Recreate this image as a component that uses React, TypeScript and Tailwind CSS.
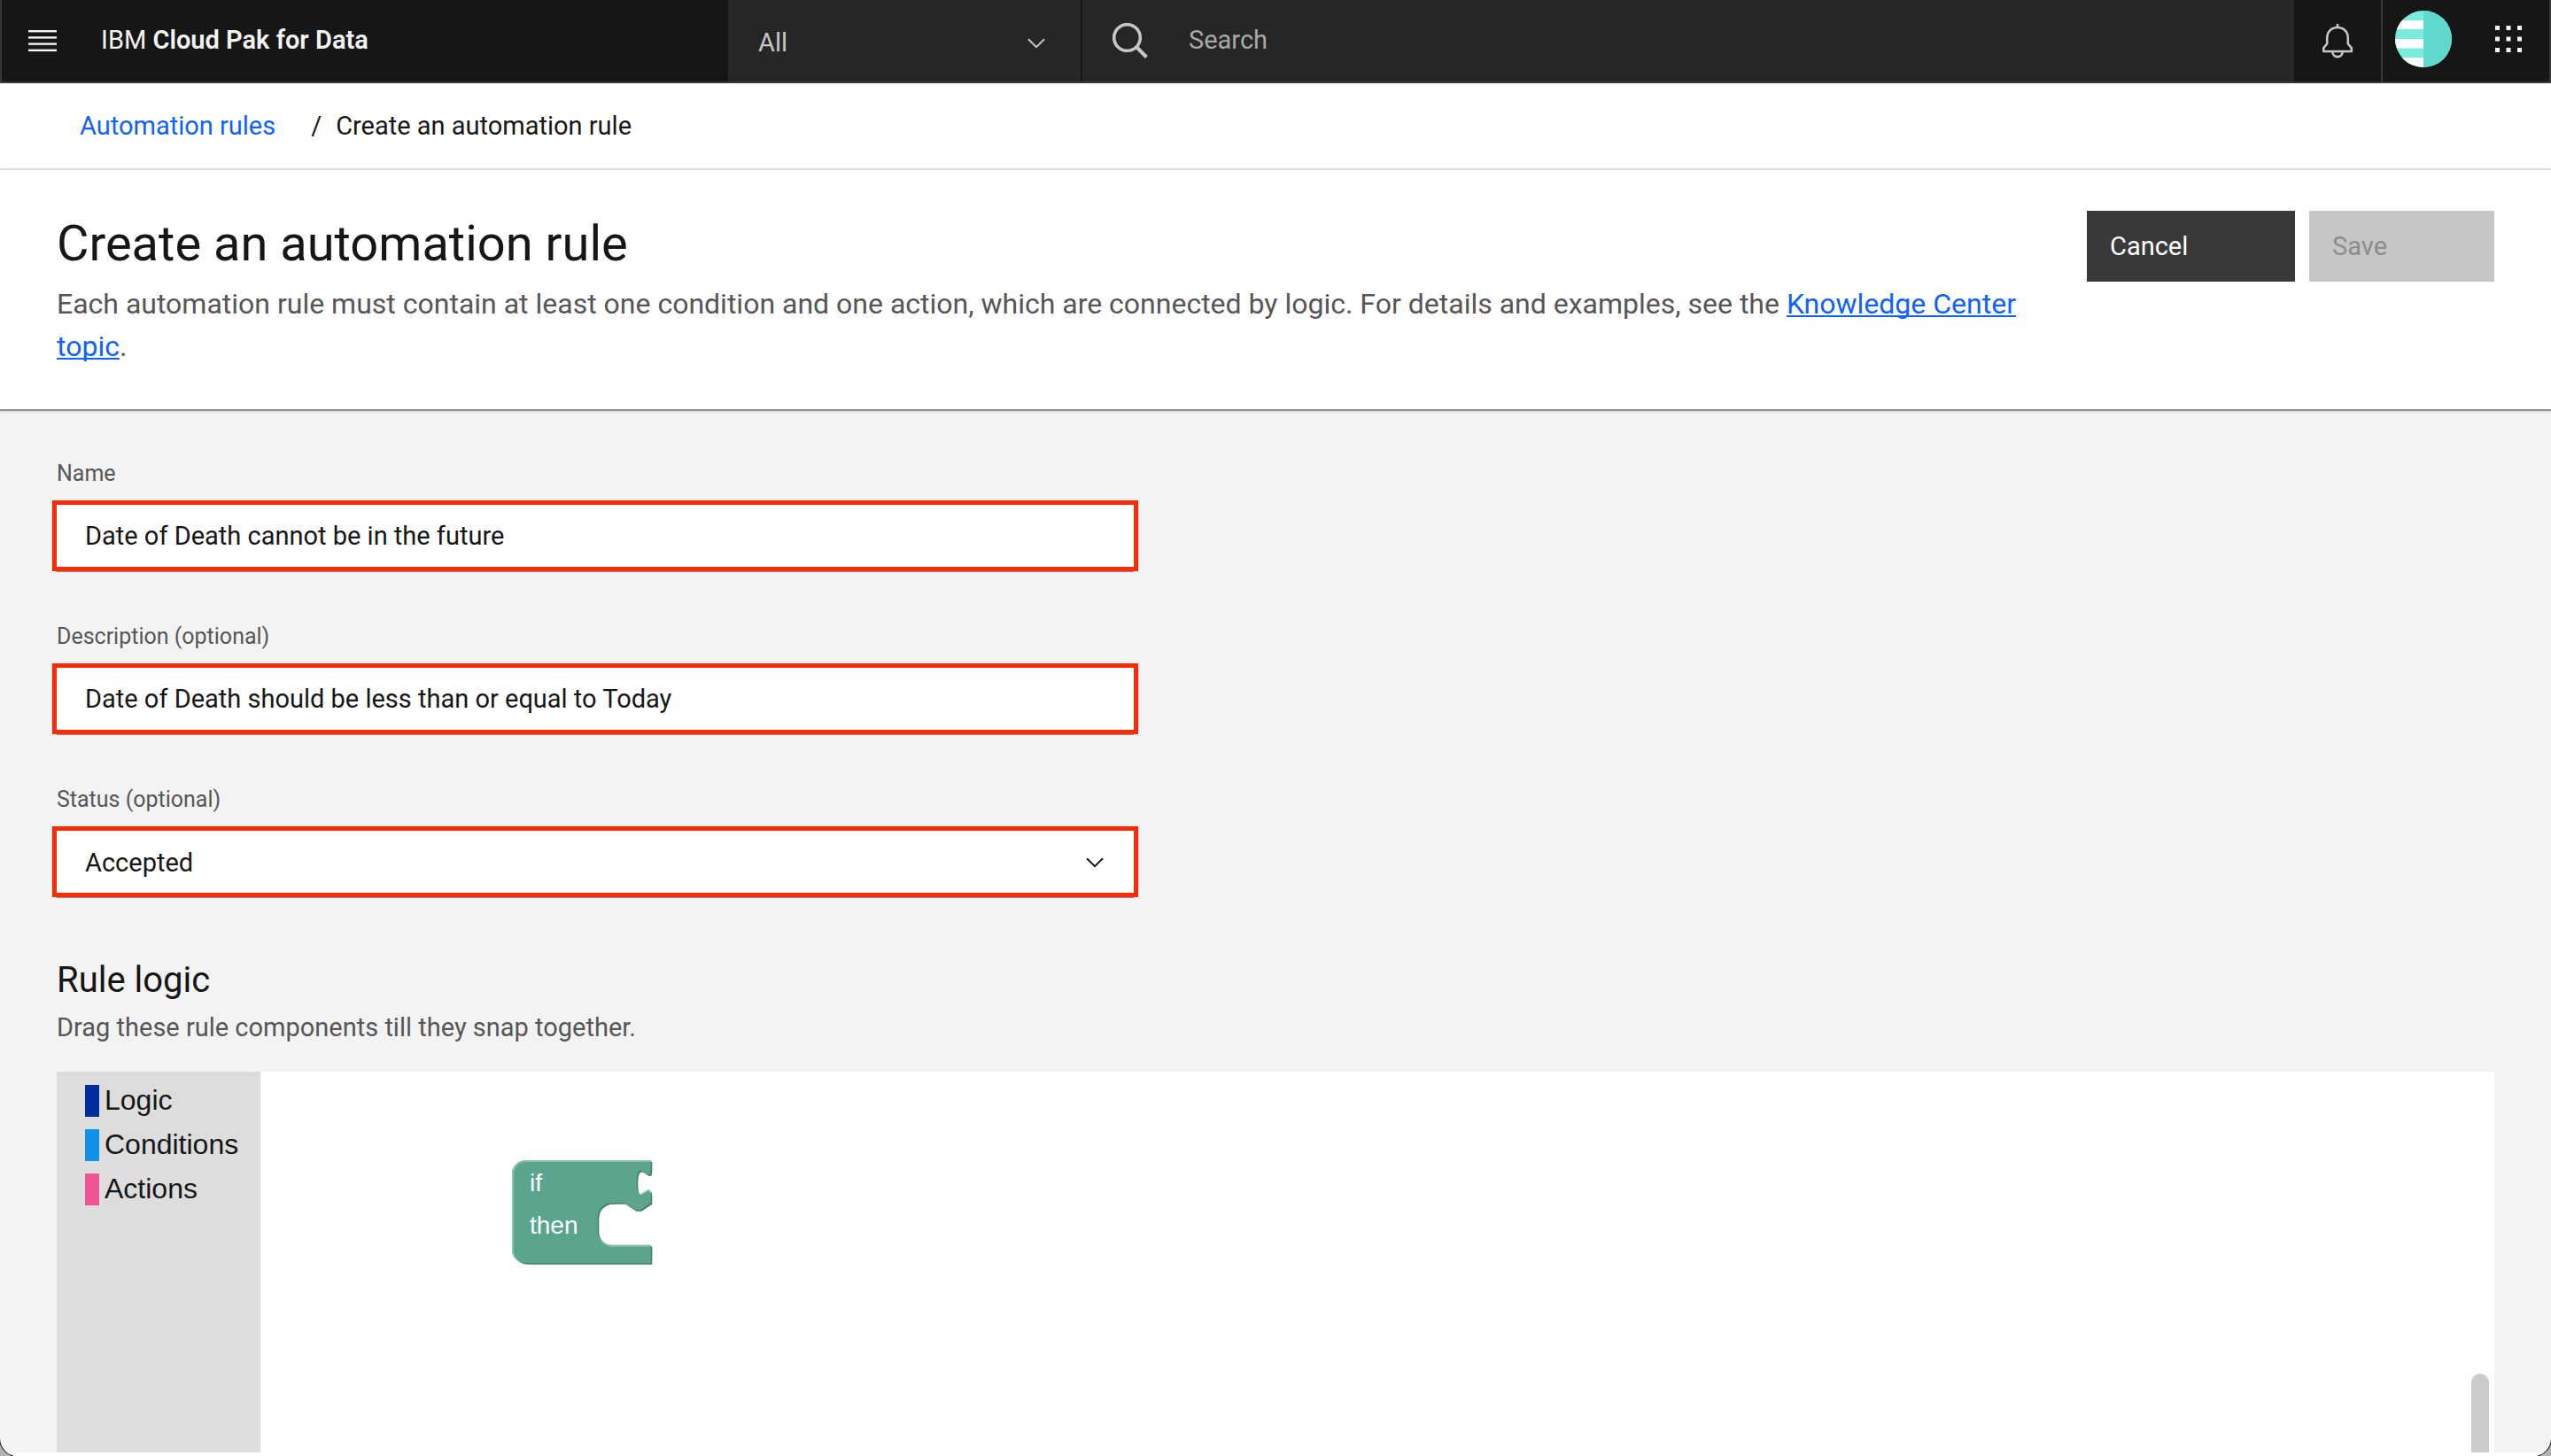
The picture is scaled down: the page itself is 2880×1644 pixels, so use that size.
import React from "react";

function MenuIcon() {
  return (
    <svg className="h-6 w-8" viewBox="0 0 32 24" fill="#f4f4f4" aria-hidden="true">
      <rect y="0" width="32" height="2.4" />
      <rect y="7.2" width="32" height="2.4" />
      <rect y="14.4" width="32" height="2.4" />
      <rect y="21.6" width="32" height="2.4" />
    </svg>
  );
}

function Chevron({ className }: { className: string }) {
  return (
    <svg className={className} viewBox="0 0 20 12" fill="none" stroke="currentColor" strokeWidth="2" aria-hidden="true">
      <path d="M1 1.2 10 10.2 19 1.2" />
    </svg>
  );
}

function SearchIcon() {
  return (
    <svg className="h-10 w-10" viewBox="0 0 40 40" fill="none" stroke="#c6c6c6" aria-hidden="true">
      <circle cx="16.5" cy="16.5" r="14.8" strokeWidth="3.6" />
      <path d="M27.2 27.2 38.4 38.4" strokeWidth="4.2" />
    </svg>
  );
}

function BellIcon() {
  return (
    <svg className="h-10 w-9" viewBox="0 0 36 40" fill="none" stroke="#c6c6c6" strokeWidth="2.6" strokeLinejoin="round" aria-hidden="true">
      <path d="M18 1v4" />
      <path d="M18 5C11 5 6.2 10 6.2 17v6.5L2.2 28.2V32H33.8V28.2L29.8 23.5V17C29.8 10 25 5 18 5Z" />
      <path d="M12.4 32.5c0 3.4 2.5 5.6 5.6 5.6s5.6-2.2 5.6-5.6" />
    </svg>
  );
}

function Avatar() {
  return (
    <svg className="size-16" viewBox="0 0 64 64" aria-hidden="true">
      <defs>
        <clipPath id="avatar-clip">
          <circle cx="32" cy="32" r="32" />
        </clipPath>
      </defs>
      <g clipPath="url(#avatar-clip)">
        <rect width="64" height="64" fill="#78eddb" />
        <rect y="11" width="32" height="10" fill="#fff" />
        <rect y="32" width="32" height="10.5" fill="#fff" />
        <rect y="53" width="32" height="11" fill="#fff" />
        <rect x="32" width="32" height="64" fill="#5fd9cb" />
      </g>
    </svg>
  );
}

function AppsIcon() {
  const steps = [0, 12.5, 25];
  return (
    <svg className="size-[30px]" viewBox="0 0 30 30" fill="#f4f4f4" aria-hidden="true">
      {steps.map((y) => steps.map((x) => <rect key={`${x}-${y}`} x={x} y={y} width="5" height="5" />))}
    </svg>
  );
}

const BLOCK =
  "M55 107A47 47 0 0 1 102 60H525V90c0 60-48-48-48 45s48-15 48 45V204l-36 24h-18l-36-24h-42a48 48 0 0 0-48 48v47a48 48 0 0 0 48 48H525V408H102A47 47 0 0 1 55 361Z";

function IfThenBlock() {
  return (
    <svg
      className="absolute left-[283px] top-[99px] h-[120px] w-40"
      viewBox="52 57 480 360"
      fontFamily='"Liberation Sans", Arial, sans-serif'
      fontSize="84"
      role="img"
      aria-label="if then block"
    >
      <path d={BLOCK} fill="#498472" transform="translate(5 5)" />
      <path d={BLOCK} fill="#5ba58f" />
      <g fill="none" stroke="#8cc0b0" strokeWidth="6">
        <path d="M68 393A46 46 0 0 1 58 361V107A44 44 0 0 1 102 63H525" />
        <path d="M360 335A48 48 0 0 0 393 350H525" />
        <path d="M489 177C500 176 520 152 525 170" strokeWidth="5" />
      </g>
      <text x="115" y="165" fill="#fff">if</text>
      <text x="115" y="308" fill="#fff">then</text>
    </svg>
  );
}

const categories = [
  { name: "Logic", color: "bg-[#012d9f]" },
  { name: "Conditions", color: "bg-[#1192e8]" },
  { name: "Actions", color: "bg-[#ee5396]" },
];

const fieldBox =
  "h-[70px] w-full appearance-none rounded-none bg-white px-8 text-[29px] text-[#161616] outline-[5px] outline-[#ff2a00] shadow-[0_6px_0_0_#8d8d8d]";

function Field({ id, label, children }: { id: string; label: string; children: React.ReactNode }) {
  return (
    <div className="flex w-[1216px] max-w-full flex-col gap-[19px]">
      <label htmlFor={id} className="text-[25px] leading-8 text-[#565656]">
        {label}
      </label>
      {children}
    </div>
  );
}

export default function App() {
  return (
    <div className="bg-[#b4b4b4] font-[Roboto,sans-serif] text-[29px] text-[#161616]">
      <div className="flex min-h-screen flex-col overflow-hidden rounded-b-[20px] bg-[#f3f3f3] shadow-[0_0_0_1px_#111]">
        <header className="flex h-[94px] border-x-2 border-b-2 border-[#393939] bg-[#161616]">
          <div className="flex w-[820px] items-center gap-[50px] pl-[30px]">
            <button type="button" aria-label="Menu">
              <MenuIcon />
            </button>
            <p className="text-[#f4f4f4]">
              IBM <span className="font-semibold">Cloud Pak for Data</span>
            </p>
          </div>
          <button
            type="button"
            className="flex w-[400px] items-center justify-between border-r-2 border-[#161616] bg-[#262626] pl-[34px] pr-10 pt-1.5 text-[#c6c6c6]"
          >
            All
            <Chevron className="h-3 w-5" />
          </button>
          <label className="flex flex-1 items-center gap-[46px] bg-[#262626] pl-[34px]">
            <SearchIcon />
            <input
              type="search"
              aria-label="Search"
              placeholder="Search"
              className="flex-1 bg-transparent outline-none placeholder:text-[#a8a8a8]"
            />
          </label>
          <button type="button" aria-label="Notifications" className="flex w-[100px] items-center justify-center border-r-2 border-[#393939]">
            <BellIcon />
          </button>
          <div className="flex items-center gap-[49px] pb-1 pl-[14px] pr-[31px]">
            <button type="button" aria-label="Profile">
              <Avatar />
            </button>
            <button type="button" aria-label="Switch application">
              <AppsIcon />
            </button>
          </div>
        </header>

        <nav aria-label="Breadcrumb" className="flex h-[98px] items-center border-b-2 border-[#e0e0e0] bg-white pl-[90px] pt-0.5">
          <a href="#rules" className="text-[#0f62fe]">
            Automation rules
          </a>
          <span className="ml-10 mr-4">/</span>
          <span>Create an automation rule</span>
        </nav>

        <section className="flex items-start border-b-2 border-[#919191] bg-white px-16 pb-[47px] pt-[46px] shadow-sm">
          <div className="flex-1 pt-[5px]">
            <h1 className="text-[56px] leading-[64px]">Create an automation rule</h1>
            <p className="mt-3 text-[32px] leading-[48px] text-[#565656]">
              Each automation rule must contain at least one condition and one action, which are connected by logic. For
              details and examples, see the{" "}
              <a href="#topic" className="text-[#0f62fe] underline decoration-2 underline-offset-2 [text-decoration-skip-ink:none]">
                Knowledge Center topic
              </a>
              .
            </p>
          </div>
          <div className="flex gap-4">
            <button type="button" className="h-20 w-[235px] bg-[#393939] pl-[26px] pt-0.5 text-left text-white">
              Cancel
            </button>
            <button type="button" disabled className="h-20 w-[209px] bg-[#c6c6c6] pl-[26px] pt-0.5 text-left text-[#8d8d8d]">
              Save
            </button>
          </div>
        </section>

        <main className="flex flex-1 flex-col px-16 pt-[55px]">
          <form className="flex flex-col gap-[63px]">
            <Field id="name" label="Name">
              <input id="name" type="text" defaultValue="Date of Death cannot be in the future" className={fieldBox} />
            </Field>
            <Field id="description" label="Description (optional)">
              <input
                id="description"
                type="text"
                defaultValue="Date of Death should be less than or equal to Today"
                className={fieldBox}
              />
            </Field>
            <Field id="status" label="Status (optional)">
              <div className="relative">
                <select id="status" defaultValue="Accepted" className={`${fieldBox} pt-1`}>
                  <option>Accepted</option>
                </select>
                <Chevron className="pointer-events-none absolute right-[34px] top-[30px] h-3 w-5" />
              </div>
            </Field>
          </form>

          <h2 className="mt-[75px] text-[40px] leading-[48px]">Rule logic</h2>
          <p className="mt-[9px] leading-10 text-[#565656]">Drag these rule components till they snap together.</p>

          <div className="mt-[30px] flex flex-1 bg-white font-['Liberation_Sans',Arial,sans-serif]">
            <ul className="flex w-[230px] flex-col gap-[14px] bg-[#dddddd] pl-8 pt-[15px] text-[32px] leading-[34px]">
              {categories.map((c) => (
                <li key={c.name} className="flex gap-1.5">
                  <span className={`h-9 w-4 ${c.color}`} />
                  {c.name}
                </li>
              ))}
            </ul>
            <div className="relative min-h-[430px] flex-1">
              <IfThenBlock />
              <div className="absolute bottom-0 right-[6px] h-[89px] w-5 rounded-t-full bg-[#cbcbcb]" />
            </div>
          </div>
        </main>
        <div className="h-1 bg-white" />
      </div>
    </div>
  );
}
